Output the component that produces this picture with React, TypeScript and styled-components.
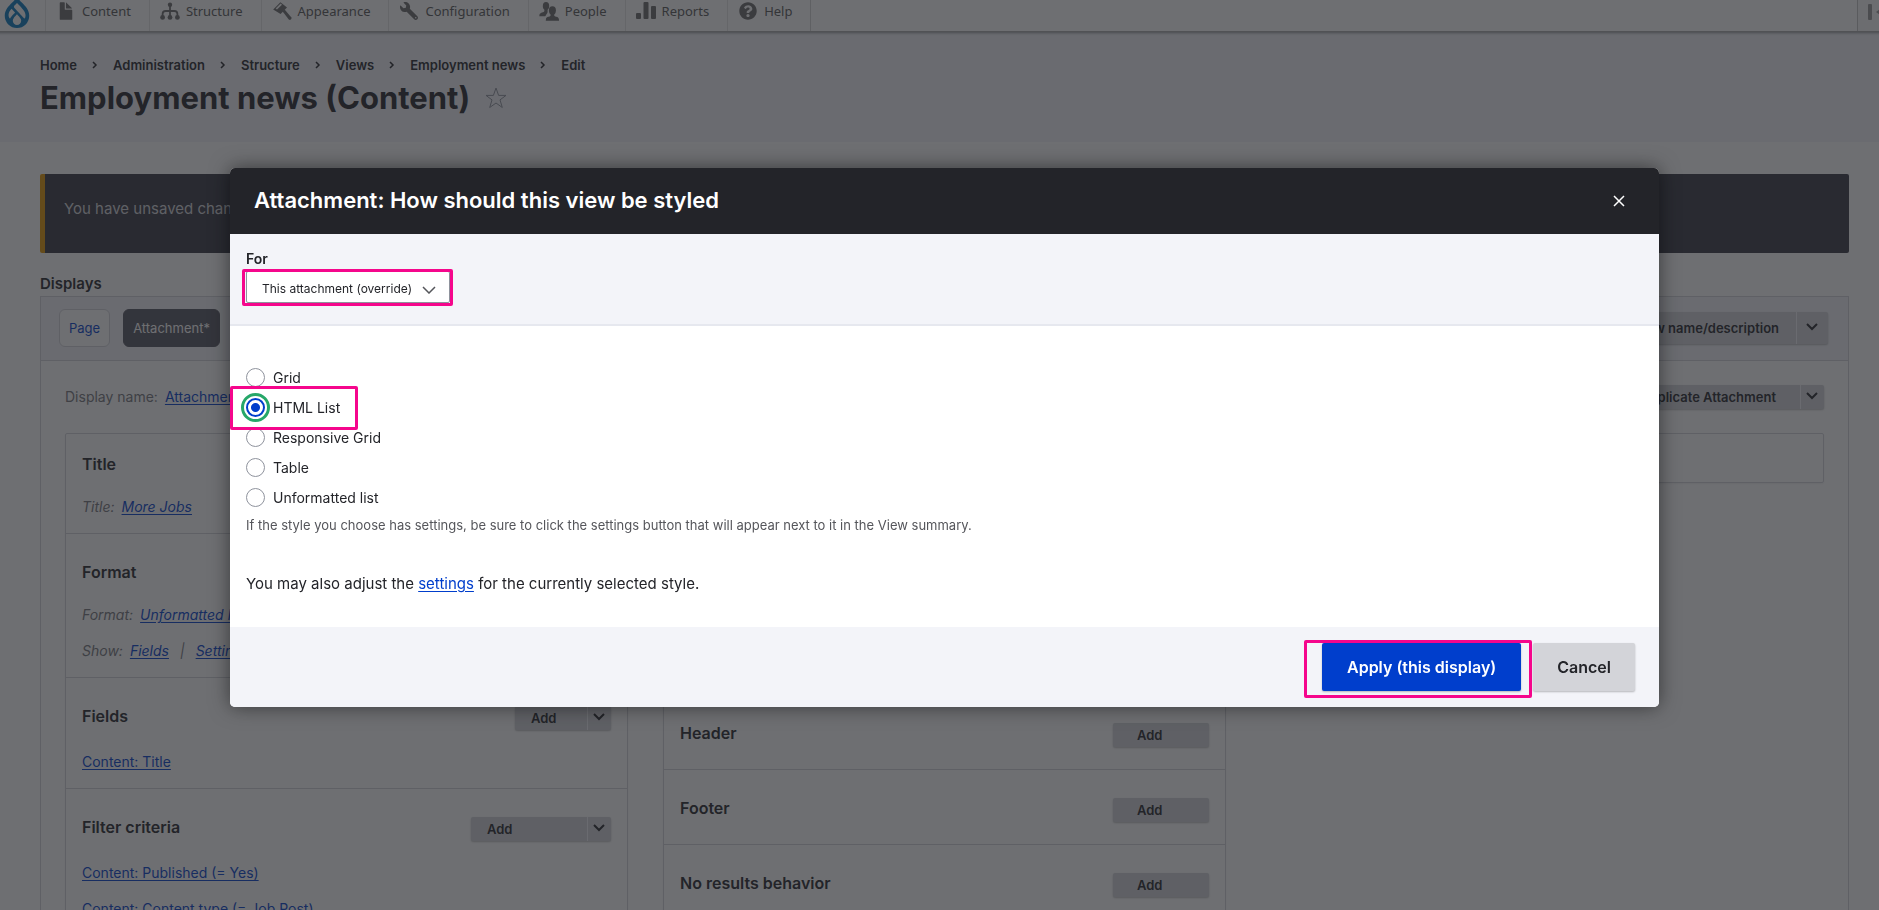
import React from "react";
import styled, { createGlobalStyle, css } from "styled-components";
import { SiDrupal } from "react-icons/si";
import { FaWrench, FaQuestionCircle } from "react-icons/fa";

const color = {
  text: "#232429",
  muted: "#55565b",
  blue: "#003ecc",
  line: "#d3d4d9",
  pale: "#f3f4f9",
  grey: "#d3d4d9",
  pink: "#f5068c",
  green: "#26a769",
};

const GlobalStyle = createGlobalStyle`
  *, *::before, *::after { box-sizing: border-box; }
  body {
    margin: 0;
    overflow: hidden;
    background: #fff;
    color: ${color.text};
    font-family: Inter, "Liberation Sans", sans-serif;
    font-size: 15px;
    line-height: 24px;
  }
  h1, h2, h3, p, ul, ol, fieldset { margin: 0; padding: 0; border: 0; }
  ul, ol { list-style: none; }
  button, select, input { font: inherit; color: inherit; margin: 0; }
  a { color: ${color.blue}; text-underline-offset: 2px; }
`;

const Page = styled.div`
  height: 100vh;
  overflow: hidden;
`;

/* ---------- Admin toolbar ---------- */

const Toolbar = styled.nav`
  position: relative;
  display: flex;
  align-items: flex-end;
  height: 31px;
  overflow: hidden;
  background: #fff;
`;

const ToolbarHome = styled.a`
  display: flex;
  flex: none;
  width: 45px;
  padding: 0 0 3px 1px;
  color: #0678be;
`;

const ToolbarItems = styled.ul`
  display: flex;
  flex: 1;
`;

const ToolbarItem = styled.li<{ $last?: boolean }>`
  display: flex;
  border-left: 1px solid #e4e4e4;
  ${(p) => p.$last && css`border-right: 1px solid #d4d4d4;`}
`;

const ToolbarLink = styled.a`
  display: flex;
  align-items: center;
  gap: 6px;
  height: 39px;
  padding: 0 18px 2px 10px;
  color: #565656;
  font: 13px/20px "Noto Sans", "Open Sans", sans-serif;
  text-decoration: none;
`;

const ToolbarIcon = styled.svg`
  width: 20px;
  height: 20px;
  fill: #6a6a6a;
`;

const WrenchIcon = styled(FaWrench)`
  width: 20px;
  height: 18px;
  color: #6a6a6a;
  transform: scaleX(-1);
`;

const HelpIcon = styled(FaQuestionCircle)`
  width: 20px;
  height: 18px;
  color: #6a6a6a;
`;

const OrientationButton = styled.button`
  display: flex;
  align-items: center;
  flex: none;
  width: 22px;
  height: 39px;
  padding: 0 0 0 10px;
  overflow: hidden;
  border: 0;
  border-left: 1px solid #c4c4c4;
  background: #fafafa;
  svg { flex: none; fill: #999; }
`;

/* ---------- Page header ---------- */

const PageHeader = styled.header`
  position: relative;
  height: 111px;
  padding: 21px 30px 0 40px;
  border-top: 1px solid #aaa;
  background: ${color.pale};
  box-shadow: inset 0 5px 3px -4px rgba(0, 0, 0, 0.4);
`;

const Breadcrumbs = styled.ol`
  display: flex;
  font-size: 13px;
  font-weight: 600;
  line-height: 24px;
`;

const Crumb = styled.li`
  display: flex;
  align-items: center;
  a { color: ${color.text}; text-decoration: none; }
  svg { margin: 0 15px; }
`;

const TitleRow = styled.div`
  display: flex;
  align-items: center;
  gap: 14px;
`;

const PageTitle = styled.h1`
  font-size: 31px;
  font-weight: 700;
  line-height: 42px;
`;

const StarButton = styled.button`
  display: flex;
  padding: 0;
  border: 0;
  background: none;
`;

/* ---------- Views form behind the dialog ---------- */

const Content = styled.main`
  padding: 32px 30px 0 40px;
`;

const Message = styled.div`
  height: 79px;
  padding: 23px 24px 0 19px;
  border-left: 5px solid #e29700;
  border-radius: 2px;
  background: #353641;
  color: ${color.grey};
`;

const DisplaysTitle = styled.h2`
  margin-top: 19px;
  font-size: 15px;
  font-weight: 600;
  line-height: 24px;
`;

const DisplayPanel = styled.section`
  border: 1px solid ${color.line};
`;

const DisplayTabs = styled.div`
  display: flex;
  align-items: center;
  gap: 13px;
  height: 64px;
  padding: 0 20px 1px 18px;
  border-bottom: 1px solid ${color.line};
  background: ${color.pale};
`;

const TabButton = styled.button<{ $active?: boolean }>`
  height: 38px;
  padding: 0 9px;
  border: 1px solid ${(p) => (p.$active ? "#545560" : color.line)};
  border-radius: 6px;
  background: ${(p) => (p.$active ? "#545560" : "#fff")};
  color: ${(p) => (p.$active ? "#fff" : color.blue)};
  font-size: 13px;
`;

const DisplayBody = styled.div`
  padding: 24px 24px 0;
`;

const DisplayTop = styled.div`
  display: flex;
  align-items: center;
  justify-content: space-between;
  margin-bottom: 24px;
`;

const Setting = styled.div<{ $italic?: boolean }>`
  display: flex;
  align-items: center;
  gap: 7px;
  color: #75767b;
  font-size: 14px;
  font-style: ${(p) => (p.$italic ? "italic" : "normal")};
  line-height: 24px;
  white-space: nowrap;
`;

const Divider = styled.span`
  padding: 0 4px;
`;

const Split = styled.div<{ $push?: boolean }>`
  display: flex;
  flex: none;
  margin-left: ${(p) => (p.$push ? "auto" : "0")};
  border-radius: 2px;
  background: ${color.grey};
  box-shadow: 0 1px 2px rgba(0, 0, 0, 0.25);
`;

const SplitMain = styled.button<{ $tall?: boolean; $width?: number; $indent?: number }>`
  height: ${(p) => (p.$tall ? 32 : 24)}px;
  width: ${(p) => (p.$width ? `${p.$width}px` : "auto")};
  padding: 0 ${(p) => (p.$width ? 0 : p.$tall ? 17 : 24)}px 0 ${(p) => p.$indent ?? 16}px;
  border: 0;
  background: none;
  font-size: 13px;
  font-weight: 600;
  line-height: 20px;
  text-align: left;
`;

const SplitToggle = styled.button<{ $tall?: boolean }>`
  display: flex;
  align-items: center;
  justify-content: center;
  width: ${(p) => (p.$tall ? 32 : 24)}px;
  padding: 0 1px 2px 0;
  border: 0;
  border-left: 1px solid #f3f4f9;
  background: none;
`;

const Columns = styled.div`
  display: grid;
  grid-template-columns: repeat(3, minmax(0, 1fr));
  align-items: start;
  gap: 35px;
`;

const Bucket = styled.div`
  min-height: 50px;
  border: 1px solid ${color.line};
  border-radius: 2px;
  box-shadow: 0 1px 2px rgba(0, 0, 0, 0.06);
`;

const BucketSection = styled.section<{ $bare?: boolean }>`
  padding: 26px 16px ${(p) => (p.$bare ? 24 : 8)}px;
  border-top: 1px solid ${color.line};
  &:first-child { padding-top: 18px; border-top: 0; }
`;

const SettingsSection = styled.section`
  height: 260px;
`;

const BucketHead = styled.div<{ $actions?: boolean }>`
  display: flex;
  align-items: flex-start;
  justify-content: space-between;
  height: 24px;
  & + * { margin-top: ${(p) => (p.$actions ? 16 : 13)}px; }
  ${Split} { margin-top: 2px; }
`;

const BucketTitle = styled.h3`
  font-size: 16px;
  font-weight: 600;
  line-height: 24px;
`;

const BucketRow = styled.li`
  display: flex;
  align-items: center;
  height: 36px;
  font-size: 14px;
`;

/* ---------- Modal ---------- */

const Overlay = styled.div`
  position: fixed;
  inset: 0;
  padding: 168px 220px 0 230px;
  background: rgba(35, 36, 41, 0.66);
`;

const Dialog = styled.div`
  border-radius: 5px;
  background: #fff;
  box-shadow: 0 0 20px rgba(0, 0, 0, 0.5);
`;

const DialogTitlebar = styled.header`
  display: flex;
  align-items: center;
  justify-content: space-between;
  height: 66px;
  padding: 0 32px 0 24px;
  border-radius: 5px 5px 0 0;
  background: ${color.text};
  color: #fff;
`;

const DialogTitle = styled.h2`
  padding-bottom: 2px;
  font-size: 22px;
  font-weight: 600;
  line-height: 28px;
`;

const CloseButton = styled.button`
  display: flex;
  padding: 2px;
  border: 0;
  background: none;
`;

const OverrideBar = styled.div`
  display: flex;
  flex-direction: column;
  align-items: flex-start;
  height: 92px;
  padding: 13px 16px 0;
  border-bottom: 2px solid #e6e8ef;
  background: ${color.pale};
`;

const FieldLabel = styled.label`
  font-size: 14px;
  font-weight: 600;
  line-height: 24px;
`;

const Highlight = styled.span<{ $inset: string }>`
  position: relative;
  display: inline-flex;
  &::after {
    content: "";
    position: absolute;
    z-index: 1;
    inset: ${(p) => p.$inset};
    border: 3px solid ${color.pink};
    border-radius: 2px;
    pointer-events: none;
  }
`;

const SelectBox = styled.select`
  appearance: none;
  width: 204px;
  height: 32px;
  padding: 4px 15px 0;
  border: 1px solid #8e929c;
  border-radius: 2px;
  background: #fff;
  font-size: 12px;
  line-height: 20px;
`;

const SelectChevron = styled.svg`
  position: absolute;
  right: 14px;
  top: 15px;
  pointer-events: none;
`;

const DialogBody = styled.div`
  padding: 36px 16px 31px;
`;

const RadioRow = styled.div`
  display: flex;
  height: 30px;
`;

const RadioLabel = styled.label`
  display: flex;
  align-items: center;
  gap: 8px;
  height: 30px;
  padding-top: 2px;
  font-size: 14px;
`;

const Radio = styled.input`
  appearance: none;
  width: 19px;
  height: 19px;
  margin-bottom: 2px;
  border: 1px solid #8e929c;
  border-radius: 50%;
  background: #fff;
  &:checked {
    border: 2px solid ${color.blue};
    background: radial-gradient(circle, ${color.blue} 0 4px, #fff 5px);
    outline: 3px solid ${color.green};
    outline-offset: 2px;
  }
`;

const Description = styled.p`
  margin-top: 3px;
  color: ${color.muted};
  font-size: 13px;
  line-height: 20px;
`;

const Note = styled.p`
  margin-top: 37px;
  line-height: 24px;
`;

const DialogActions = styled.footer`
  display: flex;
  justify-content: flex-end;
  gap: 12px;
  padding: 16px 24px;
  border-radius: 0 0 5px 5px;
  background: ${color.pale};
`;

const ActionButton = styled.button<{ $primary?: boolean }>`
  height: 48px;
  padding: 0 ${(p) => (p.$primary ? 25 : 24)}px;
  border: 0;
  border-radius: 2px;
  background: ${(p) => (p.$primary ? color.blue : color.grey)};
  color: ${(p) => (p.$primary ? "#fff" : color.text)};
  box-shadow: 0 1px 2px rgba(0, 0, 0, 0.25);
  font-size: 16px;
  font-weight: 600;
`;

/* ---------- Drawings ---------- */

const FileIcon = () => (
  <ToolbarIcon viewBox="0 0 16 16">
    <path d="M12.5 7h-5a.5.5 0 0 1-.5-.5v-5a.5.5 0 0 0-.5-.5h-3a.5.5 0 0 0-.5.5v13c0 .3.2.5.5.5h9c.3 0 .5-.2.5-.5v-7a.5.5 0 0 0-.5-.5zM8.500 6h4c.3 0 .35-.16.15-.35L8.350 1.350C8.160 1.160 8 1.220 8 1.500v4c0 .3.2.5.5.5z" />
  </ToolbarIcon>
);

const StructureIcon = () => (
  <ToolbarIcon viewBox="0 0 20 20">
    <circle cx="10" cy="3.800" r="2.200" />
    <circle cx="2.600" cy="16.400" r="2.400" />
    <circle cx="10" cy="16.400" r="2.400" />
    <circle cx="17.400" cy="16.400" r="2.400" />
    <path d="M10 4v12M2.600 16v-3q0-3 3-3h8.800q3 0 3 3v3" fill="none" stroke="#6a6a6a" strokeWidth="1.800" />
  </ToolbarIcon>
);

const BrushIcon = () => (
  <ToolbarIcon viewBox="0 0 20 20">
    <path d="M1.200 8.400 8.400 1.200 15 6.600 8.600 13z" />
    <path d="M3.600 7.400 8.600 2.600 10 3.800 5 8.600z" fill="#fff" />
    <path d="m10.600 10.400 2-2 6.800 8.200q.4 1.300-.6 2-1 .6-2 0z" />
  </ToolbarIcon>
);

const PeopleIcon = () => (
  <ToolbarIcon viewBox="0 0 20 20">
    <ellipse cx="7" cy="5" rx="3.200" ry="4" />
    <path d="M5.400 7.500h3.200v3.200q0 1.200-1 2.300l-1.300 2.200H.3q-.3-2.800 2-3.500l2.300-.8q.8-.3.8-1.400z" />
    <ellipse cx="13.400" cy="9.400" rx="3.500" ry="4.200" />
    <path d="M11.600 12h3.600v2.200q0 1 1 1.300l2.200.6q1.800.7 1.600 3.700H6.800q-.2-3 1.600-3.700l2.200-.6q1-.3 1-1.300z" />
  </ToolbarIcon>
);

const ChartIcon = () => (
  <ToolbarIcon viewBox="0 0 20 20">
    <rect x="0" y="12" width="5" height="6" rx="1" />
    <rect x="7.500" y="1" width="5" height="17" rx="1" />
    <rect x="15" y="5" width="5" height="13" rx="1" />
  </ToolbarIcon>
);

const Chevron = () => (
  <svg width="12" height="8" viewBox="0 0 12 8" fill="none" stroke={color.text} strokeWidth="2">
    <path d="M1 1l5 5 5-5" />
  </svg>
);

/* ---------- Data ---------- */

const toolbarItems = [
  { label: "Content", icon: <FileIcon /> },
  { label: "Structure", icon: <StructureIcon /> },
  { label: "Appearance", icon: <BrushIcon /> },
  { label: "Configuration", icon: <WrenchIcon /> },
  { label: "People", icon: <PeopleIcon /> },
  { label: "Reports", icon: <ChartIcon /> },
  { label: "Help", icon: <HelpIcon /> },
];

const crumbs = ["Home", "Administration", "Structure", "Views", "Employment news", "Edit"];
const styles = ["Grid", "HTML List", "Responsive Grid", "Table", "Unformatted list"];

const StyleOption = ({ name }: { name: string }) => (
  <RadioLabel>
    <Radio type="radio" name="style" value={name} defaultChecked={name === "HTML List"} />
    {name}
  </RadioLabel>
);

const AddButton = ({ width }: { width: number }) => (
  <Split>
    <SplitMain $width={width}>Add</SplitMain>
    <SplitToggle aria-label="More actions"><Chevron /></SplitToggle>
  </Split>
);

export default function App() {
  return (
    <>
      <GlobalStyle />
      <Page>
        <Toolbar>
          <ToolbarHome href="#" aria-label="Home"><SiDrupal size={32} /></ToolbarHome>
          <ToolbarItems>
            {toolbarItems.map((item, i) => (
              <ToolbarItem key={item.label} $last={i === toolbarItems.length - 1}>
                <ToolbarLink href="#">{item.icon}{item.label}</ToolbarLink>
              </ToolbarItem>
            ))}
          </ToolbarItems>
          <OrientationButton aria-label="Vertical orientation">
            <svg width="20" height="16" viewBox="0 0 20 16">
              <rect x="0" y="0" width="4" height="16" rx="1" />
              <path d="M8 8l8-6v12z" />
            </svg>
          </OrientationButton>
        </Toolbar>

        <PageHeader>
          <Breadcrumbs>
            {crumbs.map((c, i) => (
              <Crumb key={c}>
                {i > 0 && (
                  <svg width="6" height="8" viewBox="0 0 6 8" fill="none" stroke={color.text} strokeWidth="1.500">
                    <path d="M1 1l3 3-3 3" />
                  </svg>
                )}
                <a href="#">{c}</a>
              </Crumb>
            ))}
          </Breadcrumbs>
          <TitleRow>
            <PageTitle>Employment news (Content)</PageTitle>
            <StarButton aria-label="Add to shortcuts">
              <svg width="24" height="24" viewBox="0 0 24 24" fill="none" stroke="#8e929c">
                <path d="M12 2l2.600 7.400H22l-6 4.500 2.300 7.600L12 17l-6.300 4.500L8 13.900 2 9.400h7.400z" />
              </svg>
            </StarButton>
          </TitleRow>
        </PageHeader>

        <Content>
          <Message>You have unsaved changes.</Message>
          <DisplaysTitle>Displays</DisplaysTitle>
          <DisplayPanel>
            <DisplayTabs>
              <TabButton>Page</TabButton>
              <TabButton $active>Attachment*</TabButton>
              <Split $push>
                <SplitMain $tall>Edit view name/description</SplitMain>
                <SplitToggle $tall aria-label="More view actions"><Chevron /></SplitToggle>
              </Split>
            </DisplayTabs>
            <DisplayBody>
              <DisplayTop>
                <Setting>Display name: <a href="#">Attachment</a></Setting>
                <Split>
                  <SplitMain>Duplicate Attachment</SplitMain>
                  <SplitToggle aria-label="More display actions"><Chevron /></SplitToggle>
                </Split>
              </DisplayTop>
              <Columns>
                <Bucket>
                  <BucketSection>
                    <BucketHead><BucketTitle>Title</BucketTitle></BucketHead>
                    <ul>
                      <BucketRow><Setting $italic>Title: <a href="#">More Jobs</a></Setting></BucketRow>
                    </ul>
                  </BucketSection>
                  <BucketSection>
                    <BucketHead><BucketTitle>Format</BucketTitle></BucketHead>
                    <ul>
                      <BucketRow><Setting $italic>Format: <a href="#">Unformatted list</a></Setting></BucketRow>
                      <BucketRow>
                        <Setting $italic>
                          Show: <a href="#">Fields</a><Divider>|</Divider><a href="#">Settings</a>
                        </Setting>
                      </BucketRow>
                    </ul>
                  </BucketSection>
                  <BucketSection>
                    <BucketHead $actions>
                      <BucketTitle>Fields</BucketTitle>
                      <AddButton width={72} />
                    </BucketHead>
                    <ul>
                      <BucketRow><a href="#">Content: Title</a></BucketRow>
                    </ul>
                  </BucketSection>
                  <BucketSection>
                    <BucketHead $actions>
                      <BucketTitle>Filter criteria</BucketTitle>
                      <AddButton width={116} />
                    </BucketHead>
                    <ul>
                      <BucketRow><a href="#">Content: Published (= Yes)</a></BucketRow>
                      <BucketRow><a href="#">Content: Content type (= Job Post)</a></BucketRow>
                    </ul>
                  </BucketSection>
                </Bucket>
                <Bucket>
                  <SettingsSection />
                  {["Header", "Footer", "No results behavior"].map((title) => (
                    <BucketSection key={title} $bare>
                      <BucketHead>
                        <BucketTitle>{title}</BucketTitle>
                        <Split><SplitMain $width={96} $indent={24}>Add</SplitMain></Split>
                      </BucketHead>
                    </BucketSection>
                  ))}
                </Bucket>
                <Bucket />
              </Columns>
            </DisplayBody>
          </DisplayPanel>
        </Content>
      </Page>

      <Overlay>
        <Dialog role="dialog" aria-labelledby="dialog-title">
          <DialogTitlebar>
            <DialogTitle id="dialog-title">Attachment: How should this view be styled</DialogTitle>
            <CloseButton aria-label="Close">
              <svg width="12" height="12" viewBox="0 0 12 12" fill="none" stroke="#fff" strokeWidth="1.500">
                <path d="M1 1l10 10M11 1L1 11" />
              </svg>
            </CloseButton>
          </DialogTitlebar>
          <OverrideBar>
            <FieldLabel htmlFor="override">For</FieldLabel>
            <Highlight $inset="-2px -3px -3px -4px">
              <SelectBox id="override">
                <option>This attachment (override)</option>
              </SelectBox>
              <SelectChevron width="14" height="8" viewBox="0 0 14 8" fill="none" stroke="#55565b" strokeWidth="1.500">
                <path d="M1 1l6 6 6-6" />
              </SelectChevron>
            </Highlight>
          </OverrideBar>
          <DialogBody>
            <fieldset>
              {styles.map((name) => (
                <RadioRow key={name}>
                  {name === "HTML List" ? (
                    <Highlight $inset="-6px -18px -8px -16px"><StyleOption name={name} /></Highlight>
                  ) : (
                    <StyleOption name={name} />
                  )}
                </RadioRow>
              ))}
            </fieldset>
            <Description>
              If the style you choose has settings, be sure to click the settings button that will appear next to it in
              the View summary.
            </Description>
            <Note>
              You may also adjust the <a href="#">settings</a> for the currently selected style.
            </Note>
          </DialogBody>
          <DialogActions>
            <Highlight $inset="-3px -11px -7px -18px">
              <ActionButton $primary>Apply (this display)</ActionButton>
            </Highlight>
            <ActionButton>Cancel</ActionButton>
          </DialogActions>
        </Dialog>
      </Overlay>
    </>
  );
}
